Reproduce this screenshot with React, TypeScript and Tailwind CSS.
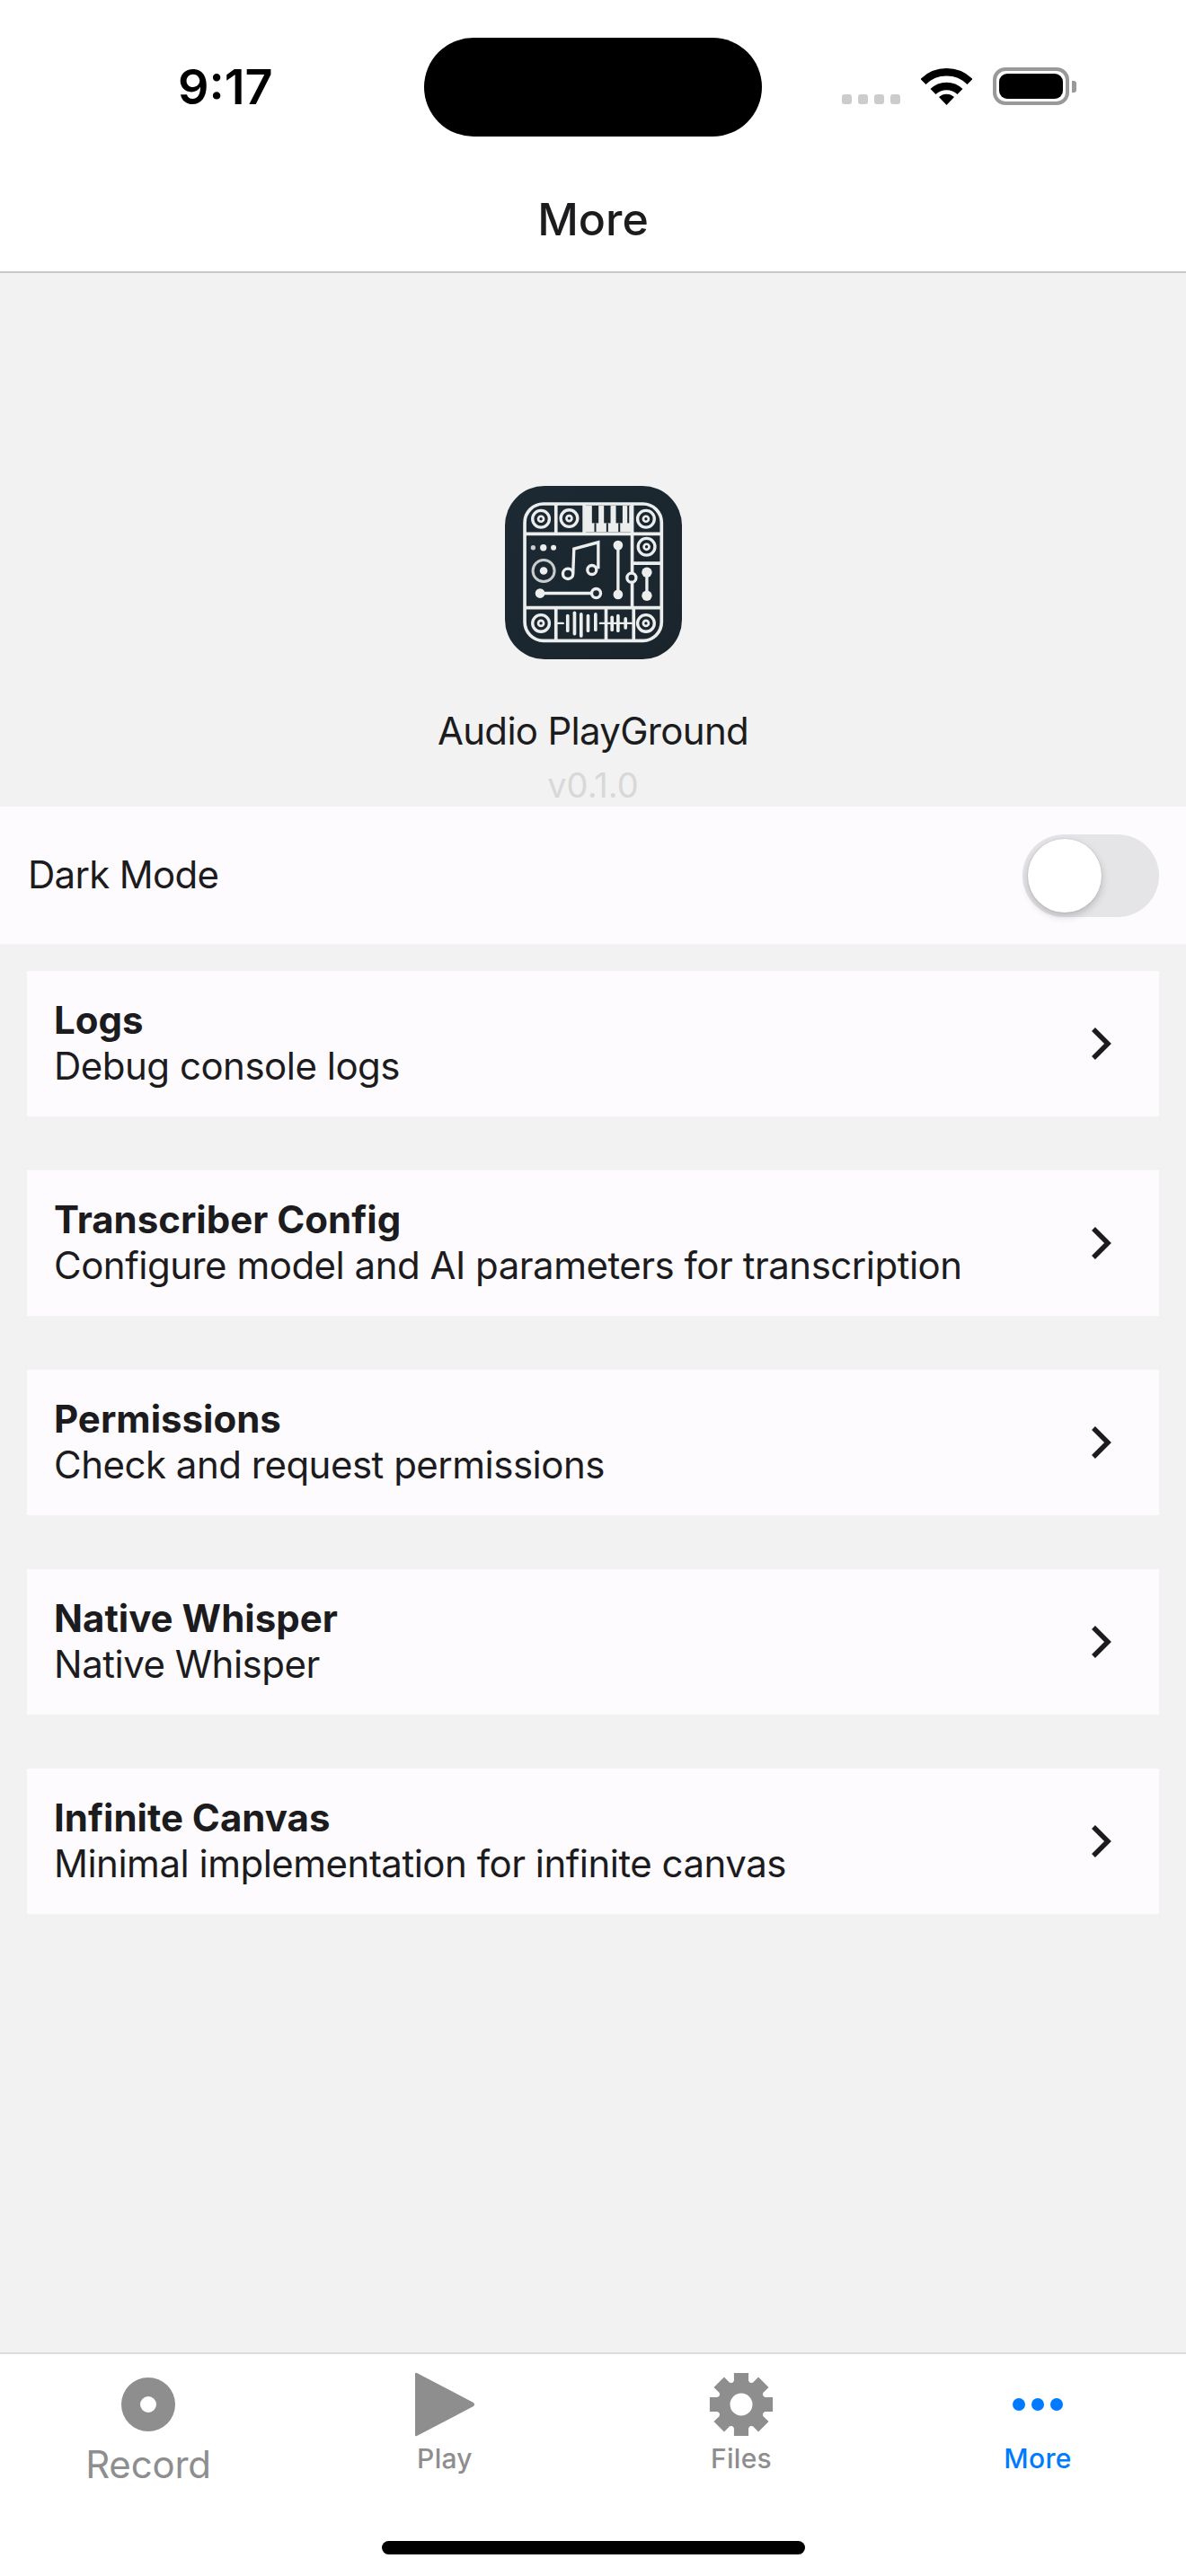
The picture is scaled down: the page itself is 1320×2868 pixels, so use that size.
const items = [
  { title: "Logs", sub: "Debug console logs" },
  { title: "Transcriber Config", sub: "Configure model and AI parameters for transcription" },
  { title: "Permissions", sub: "Check and request permissions" },
  { title: "Native Whisper", sub: "Native Whisper" },
  { title: "Infinite Canvas", sub: "Minimal implementation for infinite canvas" },
];

function gearPath(cx: number, cy: number) {
  const pt = (r: number, deg: number) => {
    const a = ((deg - 90) * Math.PI) / 180;
    return `${(cx + r * Math.cos(a)).toFixed(2)} ${(cy + r * Math.sin(a)).toFixed(2)}`;
  };
  let d = "";
  for (let i = 0; i < 8; i++) {
    const c = i * 45;
    d += `${i === 0 ? "M" : "L"}${pt(26, c - 22.5)} L${pt(27.5, c - 17)} L${pt(36, c - 13)} L${pt(36, c + 13)} L${pt(27.5, c + 17)} `;
  }
  d += "Z ";
  d += `M${cx - 12.5} ${cy} a12.5 12.5 0 1 0 25 0 a12.5 12.5 0 1 0 -25 0 Z`;
  return d;
}

function Wifi() {
  return (
    <svg width="57" height="42" viewBox="0 0 57 42">
      <path d="M2.5 16 A37 37 0 0 1 54.5 16" fill="none" stroke="#000" strokeWidth="8.5" />
      <path d="M13.5 27 A21.5 21.5 0 0 1 43.5 27" fill="none" stroke="#000" strokeWidth="8.5" />
      <path d="M28.5 42 L20 33 A12.5 12.5 0 0 1 37 33 Z" fill="#000" />
    </svg>
  );
}

function Logo() {
  const line = "#eceeee";
  const bg = "#1c2830";
  const ring = (x: number, y: number, r = 28, inner = 9) => (
    <g key={`${x}-${y}`}>
      <circle cx={x} cy={y} r={r} fill="none" stroke={line} strokeWidth="10" />
      <circle cx={x} cy={y} r={inner} fill="none" stroke={line} strokeWidth="8" />
    </g>
  );
  const wave: [number, number, number][] = [
    [277, 495, 545], [300, 485, 555], [322, 490, 562], [345, 495, 545], [370, 490, 542],
    [425, 500, 542], [445, 495, 545], [470, 505, 535],
  ];
  return (
    <svg width="197" height="193" viewBox="68 62 590 578">
      <defs>
        <linearGradient id="logo-bg" x1="0" y1="0" x2="1" y2="1">
          <stop offset="0" stopColor="#1c2a33" />
          <stop offset="1" stopColor="#1a242c" />
        </linearGradient>
      </defs>
      <rect x="68" y="62" width="590" height="578" rx="132" fill="url(#logo-bg)" />
      <rect x="335" y="128" width="155" height="88" fill={line} />
      {[358, 398, 438, 476].map((x) => (
        <rect key={x} x={x} y="126" width={x === 476 ? 6 : 22} height="60" fill={bg} />
      ))}
      {[369, 409, 449].map((x) => (
        <rect key={x} x={x - 3} y="186" width="6" height="30" fill={bg} />
      ))}
      <g fill="none" stroke={line} strokeWidth="11">
        <rect x="134" y="122" width="456" height="456" rx="62" />
        <path d="M134 222H590M134 468H590M238 122V222M332 122V222M492 122V468M492 320H590M238 468V578M405 468V578M497 468V578" />
      </g>
      {ring(188, 172)}
      {ring(282, 170)}
      {ring(538, 172)}
      {ring(540, 265)}
      {ring(188, 520)}
      {ring(538, 520)}
      <circle cx="162" cy="268" r="8" fill="#c9cccd" />
      <circle cx="196" cy="268" r="11" fill={line} />
      <circle cx="230" cy="268" r="9" fill={line} />
      <circle cx="197" cy="345" r="36" fill="none" stroke="#c9cccd" strokeWidth="9" />
      <circle cx="197" cy="345" r="13" fill={line} />
      <g fill="none" stroke={line} strokeWidth="10">
        <circle cx="278" cy="355" r="17" />
        <circle cx="358" cy="342" r="15" />
        <path d="M295 352L298 272L379 250V338" />
        <path d="M445 260V422M541 350V428M180 420H372" />
      </g>
      <circle cx="445" cy="260" r="16" fill={line} />
      <circle cx="445" cy="424" r="16" fill={line} />
      <circle cx="541" cy="350" r="17" fill={line} />
      <circle cx="541" cy="428" r="17" fill={line} />
      <circle cx="185" cy="420" r="16" fill={line} />
      <circle cx="372" cy="420" r="15" fill={bg} stroke={line} strokeWidth="10" />
      <circle cx="490" cy="368" r="15" fill={bg} stroke={line} strokeWidth="10" />
      <g stroke={line} strokeWidth="11" strokeLinecap="round" fill="none">
        {wave.map(([x, a, b]) => (
          <path key={x} d={`M${x} ${a}V${b}`} />
        ))}
        <path d="M245 520H262M385 520H490" strokeWidth="7" />
      </g>
    </svg>
  );
}

function Chevron() {
  return (
    <svg width="24" height="38" viewBox="0 0 24 38" className="mr-[53px]">
      <path d="M4 3 L20 19 L4 35" fill="none" stroke="#1c1c1e" strokeWidth="5.5" />
    </svg>
  );
}

function Tab({ label, icon, active, big }: { label: string; icon: React.ReactNode; active?: boolean; big?: boolean }) {
  return (
    <div className="w-[330px] flex flex-col items-center">
      <div className="h-[72px] mt-[20px] flex items-center justify-center">{icon}</div>
      {big ? (
        <span className="text-[42px] leading-[50px] mt-[6px] tracking-[-0.2px] text-[#8e8e8f]">{label}</span>
      ) : (
        <span className={`text-[30px] leading-[36px] font-medium mt-[6px] tracking-[0.3px] ${active ? "text-[#007aff]" : "text-[#8e8e8f]"}`}>
          {label}
        </span>
      )}
    </div>
  );
}

export default function App() {
  return (
    <div className="w-[1320px] h-[2868px] flex flex-col bg-[#f2f2f2] text-[#1c1c1e] font-['Inter',sans-serif] overflow-hidden">
      <header className="bg-white h-[304px] border-b-2 border-[#c8c8c8] shrink-0">
        <div className="h-[190px] flex items-start">
          <div className="w-[472px] pt-[62px] pl-[198px] text-[54px] leading-[70px] font-semibold text-black">9:17</div>
          <div className="w-[376px] h-[110px] mt-[42px] bg-black rounded-[55px]" />
          <div className="pt-[75px] pl-[89px] flex items-end">
            <div className="flex gap-[7px] mb-[1px]">
              {[0, 1, 2, 3].map((i) => (
                <div key={i} className="w-[11px] h-[11px] rounded-[3px] bg-[#cccccc]" />
              ))}
            </div>
            <div className="ml-[23px]">
              <Wifi />
            </div>
            <div className="ml-[23px] w-[85px] h-[42px] border-[4px] border-[#999999] rounded-[14px] p-[3px] relative">
              <div className="w-full h-full bg-black rounded-[9px]" />
              <div className="absolute left-[84px] top-[11px] w-[5px] h-[13px] bg-[#999999] rounded-r-[3px]" />
            </div>
          </div>
        </div>
        <div className="text-center text-[50px] leading-[60px] font-medium mt-[24px]">More</div>
      </header>

      <main className="flex-1 flex flex-col">
        <div className="flex flex-col items-center pt-[237px]">
          <Logo />
          <div className="mt-[52px] text-[42px] leading-[56px] tracking-[-0.7px]">Audio PlayGround</div>
          <div className="mt-[13px] text-[38px] leading-[38px] text-[#d8d8d8]">v0.1.0</div>
        </div>
        <div className="mt-[5px] h-[153px] bg-[#fefbff] flex items-center justify-between pl-[31px] pr-[30px]">
          <span className="text-[42px] leading-[52px] tracking-[-0.7px] pb-[2px]">Dark Mode</span>
          <div className="w-[152px] h-[92px] rounded-[46px] bg-[#e5e5e8] relative">
            <div className="absolute left-[6px] top-[5px] w-[82px] h-[82px] rounded-full bg-white shadow-[0_4px_10px_rgba(0,0,0,0.2),0_0_0_1px_rgba(0,0,0,0.05)]" />
          </div>
        </div>
        <div className="flex flex-col gap-[60px] mt-[30px] px-[30px]">
          {items.map((item) => (
            <div key={item.title} className="h-[162px] bg-[#fefbff] flex items-center justify-between pl-[30px]">
              <div className="flex flex-col pb-[3px]">
                <span className="text-[42px] leading-[51px] font-bold">{item.title}</span>
                <span className="text-[42px] leading-[51px] tracking-[-0.5px]">{item.sub}</span>
              </div>
              <Chevron />
            </div>
          ))}
        </div>
      </main>

      <footer className="h-[249px] shrink-0 bg-white border-t-2 border-[#dcdcdc] relative">
        <div className="flex">
          <Tab
            label="Record"
            big
            icon={
              <svg width="60" height="60" viewBox="0 0 60 60">
                <path fillRule="evenodd" fill="#8e8e8f" d="M0 30a30 30 0 1 0 60 0a30 30 0 1 0 -60 0ZM21 30a9 9 0 1 0 18 0a9 9 0 1 0 -18 0Z" />
              </svg>
            }
          />
          <Tab
            label="Play"
            icon={
              <svg width="66" height="72" viewBox="0 0 66 72">
                <path d="M0 2 Q0 0 2 1 L65 34 Q67 36 65 38 L2 71 Q0 72 0 70 Z" fill="#8e8e8f" />
              </svg>
            }
          />
          <Tab
            label="Files"
            icon={
              <svg width="72" height="72" viewBox="0 0 72 72">
                <path fillRule="evenodd" fill="#8e8e8f" d={gearPath(36, 36)} />
              </svg>
            }
          />
          <Tab
            label="More"
            active
            icon={
              <div className="flex gap-[7px]">
                <div className="w-[14px] h-[14px] rounded-full bg-[#007aff]" />
                <div className="w-[14px] h-[14px] rounded-full bg-[#007aff]" />
                <div className="w-[14px] h-[14px] rounded-full bg-[#007aff]" />
              </div>
            }
          />
        </div>
        <div className="absolute left-[425px] top-[208px] w-[471px] h-[15px] rounded-full bg-black" />
      </footer>
    </div>
  );
}
